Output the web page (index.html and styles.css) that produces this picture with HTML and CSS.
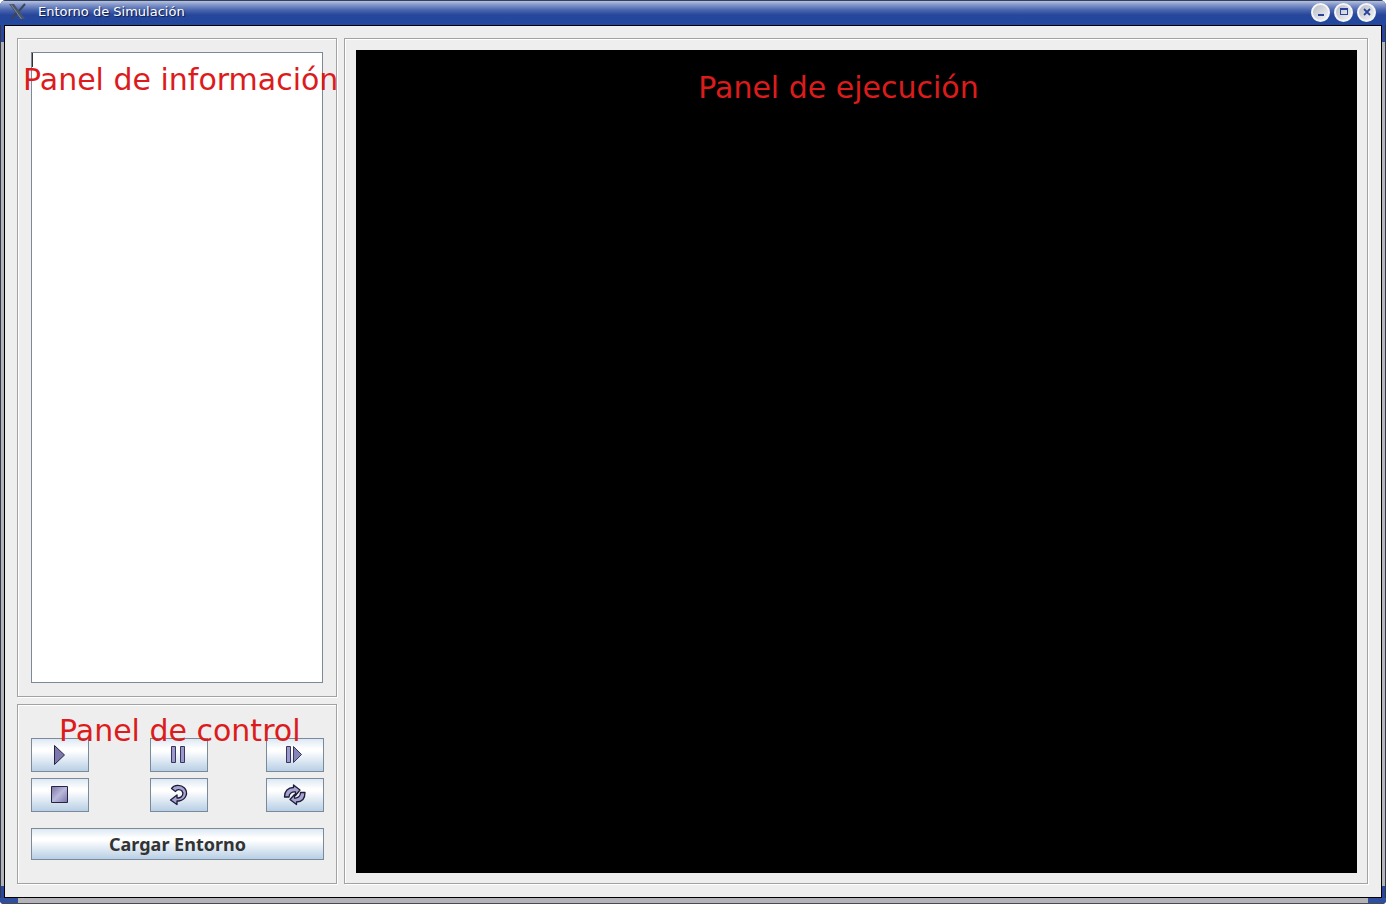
FILE: index.html
```html
<!DOCTYPE html>
<html lang="es">
<head>
<meta charset="utf-8">
<title>Entorno de Simulación</title>
<link rel="stylesheet" href="styles.css">
</head>
<body>
<div class="window">
  <header class="titlebar">
    <svg class="app-icon" width="18" height="18" viewBox="0 0 18 18" aria-hidden="true">
      <path d="M0 1h5l11 15h-5z" fill="#4b5568"/>
      <path d="M16 1L10 8M7.500 10L2 16" stroke="#3c4558" stroke-width="2"/>
      <path d="M2 1.500L12.500 16" stroke="#7d879c"/>
    </svg>
    <h1 class="title">Entorno de Simulación</h1>
    <div class="window-buttons">
      <button class="window-button" type="button" aria-label="Minimizar">
        <svg width="12" height="12" viewBox="0 0 12 12"><path d="M3 8h6v2H3z" fill="#27439a"/></svg>
      </button>
      <button class="window-button" type="button" aria-label="Maximizar">
        <svg width="12" height="12" viewBox="0 0 12 12"><path d="M2 2h8v7H2zM3 4v4h6V4z" fill="#27439a" fill-rule="evenodd"/></svg>
      </button>
      <button class="window-button" type="button" aria-label="Cerrar">
        <svg width="12" height="12" viewBox="0 0 12 12"><path d="M3 3l6 6M9 3L3 9" stroke="#27439a" stroke-width="1.800"/></svg>
      </button>
    </div>
  </header>

  <div class="frame">
    <main class="content">
      <section class="panel info-panel">
        <label class="caption info-caption" for="info">Panel de información</label>
        <textarea class="info-text" id="info"></textarea>
        <span class="caret"></span>
      </section>

      <section class="panel control-panel">
        <h2 class="caption control-caption">Panel de control</h2>
        <div class="controls">
          <button class="button" type="button" aria-label="Ejecutar">
            <svg width="24" height="24" viewBox="0 0 24 24"><path d="M6.500 2.500v19l10-9.500z" fill="#7c78ad" stroke="#25233f"/></svg>
          </button>
          <button class="button" type="button" aria-label="Pausar">
            <svg width="24" height="24" viewBox="0 0 24 24"><path d="M4.500 3.500h4v16h-4zM13.500 3.500h4v16h-4z" fill="#9a98cc" stroke="#37365a"/></svg>
          </button>
          <button class="button" type="button" aria-label="Avanzar un paso">
            <svg width="24" height="24" viewBox="0 0 24 24"><path d="M3.500 3.500h4v16h-4z" fill="#9a98cc" stroke="#37365a"/><path d="M10.500 3.500v16l8-8z" fill="#8583b8" stroke="#37365a"/></svg>
          </button>
          <button class="button" type="button" aria-label="Detener">
            <svg width="24" height="24" viewBox="0 0 24 24">
              <defs><linearGradient id="stop-fill" x1="0" y1="0" x2="1" y2="1"><stop offset="0" stop-color="#7774a8"/><stop offset=".5" stop-color="#bbb8dc"/><stop offset="1" stop-color="#7774a8"/></linearGradient></defs>
              <path d="M3.500 3.500h16v16h-16z" fill="url(#stop-fill)" stroke="#25233f"/>
            </svg>
          </button>
          <button class="button" type="button" aria-label="Reiniciar">
            <svg width="24" height="24" viewBox="0 0 24 24"><path d="M4.500 5.500C7 1.500 14 1.500 17.500 5c4 4.500 2 11.500-5.500 13h-2v3.500L3.500 17 10 12v3h1.500c4-.5 5.500-4.500 3.500-7C13 6 10 6 8.500 8.500z" fill="#a5a3d2" stroke="#1d1b36" stroke-width="1.300" stroke-linejoin="round"/></svg>
          </button>
          <button class="button" type="button" aria-label="Recargar">
            <svg width="24" height="24" viewBox="0 0 24 24"><path d="M1.500 14C1.500 8 5 4.500 10.500 4.500V2L17 7l-4.500 5.500V9C9 8.500 6 10.500 6 14z" fill="#a5a3d2" stroke="#1d1b36" stroke-width="1.300" stroke-linejoin="round"/><path d="M22 9.500c0 6-3 9.500-8.500 9.500v2.500l-6.500-5 4.500-5V15c3.500.5 6-2 6-5.500z" fill="#a5a3d2" stroke="#1d1b36" stroke-width="1.300" stroke-linejoin="round"/></svg>
          </button>
        </div>
        <button class="button load-button" type="button">Cargar Entorno</button>
      </section>

      <section class="panel run-panel">
        <div class="stage">
          <h2 class="caption run-caption">Panel de ejecución</h2>
        </div>
      </section>
    </main>
  </div>
  <div class="bottom-edge"></div>
</div>
</body>
</html>
```
FILE: styles.css
```css
* {
  box-sizing: border-box;
}

body {
  margin: 0;
  background: #fff;
  font-family: "DejaVu Sans", sans-serif;
}

.window {
  display: flex;
  flex-direction: column;
  height: 100vh;
  overflow: hidden;
  border-radius: 6px 6px 4px 4px;
  background: #1d3a7c;
}

.titlebar {
  display: flex;
  align-items: center;
  gap: 11px;
  height: 25px;
  padding: 0 10px 2px 9px;
  border-top: 1px solid #33405f;
  background: linear-gradient(#b6c2de 0, #8094c8 4px, #4a66b0 9px, #27469a 14px, #2148a0 100%);
}

.title {
  flex: 1;
  margin: 0;
  color: #fff;
  font-size: 13px;
  font-weight: normal;
  line-height: 16px;
  text-shadow: 1px 1px 1px #0c1c4c;
}

.window-buttons {
  display: flex;
  gap: 4px;
}

.window-button {
  display: grid;
  place-items: center;
  width: 19px;
  height: 19px;
  padding: 0;
  border: 2px solid #f4f5f8;
  border-radius: 50%;
  background: linear-gradient(135deg, #b9bcc6, #f4f4f6);
}

.frame {
  flex: 1;
  display: flex;
  min-height: 0;
  padding: 0 3px;
  border: solid #30384f;
  border-width: 0 1px;
  background:
    linear-gradient(#2a469a, #2a469a) top / 100% 17px no-repeat,
    linear-gradient(#2a469a, #2a469a) bottom / 100% 12px no-repeat,
    #b4b4b8;
}

.content {
  flex: 1;
  display: grid;
  grid-template-columns: 321px 1fr;
  grid-template-rows: 1fr auto;
  gap: 6px;
  min-height: 0;
  padding: 12px;
  border: 1px solid #000;
  background: #eee;
}

.panel {
  position: relative;
  margin: 0 1px 1px 0;
  border: 1px solid #a2a2a2;
  box-shadow: 1px 1px 0 #fff, inset 1px 1px 0 #fff;
}

.info-panel {
  display: flex;
  padding: 13px 13px 13px;
}

.info-text {
  flex: 1;
  min-width: 0;
  padding: 4px;
  border: 1px solid #7a8a99;
  background: #fff;
  font: 14px "DejaVu Sans", sans-serif;
  resize: none;
}

.caret {
  position: absolute;
  top: 14px;
  left: 14px;
  width: 1px;
  height: 14px;
  background: #333;
}

.control-panel {
  grid-row: 2;
  padding: 33px 12px 23px 13px;
}

.controls {
  display: grid;
  grid-template-columns: 119px 1fr 58px;
  row-gap: 6px;
}

.button {
  display: grid;
  place-items: center;
  width: 58px;
  height: 34px;
  padding: 0;
  border: 1px solid #7a8a99;
  background: linear-gradient(#dde8f3, #fff 30%, #fff 38%, #b8cfe5);
  color: #333;
}

.load-button {
  width: 100%;
  height: 32px;
  margin-top: 16px;
  font: bold 18px "Noto Sans", sans-serif;
}

.run-panel {
  grid-column: 2;
  grid-row: 1 / 3;
  display: flex;
  padding: 11px 10px 10px 11px;
}

.stage {
  position: relative;
  flex: 1;
  background: #000;
}

.caption {
  position: absolute;
  z-index: 1;
  margin: 0;
  color: #dc1c1c;
  font-size: 30px;
  font-weight: normal;
  line-height: 36px;
  white-space: nowrap;
}

.info-caption {
  top: 23px;
  left: 5px;
}

.control-caption {
  top: 8px;
  left: 41px;
}

.run-caption {
  top: 20px;
  right: 0;
  left: 0;
  padding-right: 36px;
  text-align: center;
}

.bottom-edge {
  height: 6px;
  border-bottom: 1px solid #4a4a50;
  background: linear-gradient(90deg, #2f4f9e 18px, #b4b4b8 18px, #b4b4b8 calc(100% - 18px), #2f4f9e calc(100% - 18px));
}
```
